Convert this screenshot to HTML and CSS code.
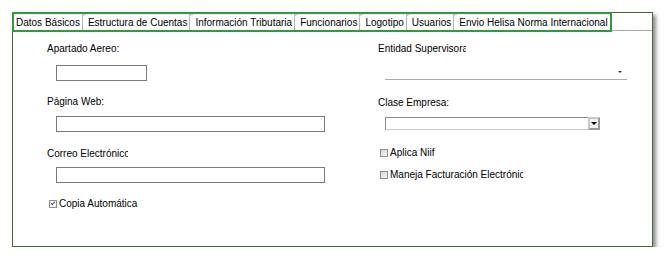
FILE: index.html
```html
<!DOCTYPE html>
<html lang="es">
  <head>
    <meta charset="UTF-8" />
    <title>Datos Básicos</title>
    <link rel="stylesheet" href="styles.css">
  </head>
  <body>
    <div class="panel">
      <div class="tabrow">
        <div class="tabs">
          <span class="tab first">Datos Básicos</span>
          <span class="tab">Estructura de Cuentas</span>
          <span class="tab">Información Tributaria</span>
          <span class="tab">Funcionarios</span>
          <span class="tab">Logotipo</span>
          <span class="tab">Usuarios</span>
          <span class="tab">Envio Helisa Norma Internacional</span>
        </div>
      </div>

      <div class="form">
        <div class="col">
          <div class="label l1">Apartado Aereo:</div>
          <div class="input short i1"></div>
          <div class="label l2">Página Web:</div>
          <div class="input long i2"></div>
          <div class="label l3 clip-left">Correo Electrónico</div>
          <div class="input long i3"></div>
          <label class="check c1"><span class="box checked"></span>Copia Automática</label>
        </div>
        <div class="col">
          <div class="label l1 clip-right">Entidad Supervisora</div>
          <div class="combo"><span class="arrow-sm"></span></div>
          <div class="label r2">Clase Empresa:</div>
          <div class="select"><span class="btn"><span class="arrow"></span></span></div>
          <label class="check c2"><span class="box"></span>Aplica Niif</label>
          <label class="check c3"><span class="box"></span><span class="clip-check">Maneja Facturación Electrónica</span></label>
        </div>
      </div>
    </div>
  </body>
</html>
```

FILE: styles.css
```css
body {
  margin: 0;
  background: #fff;
  font-family: Arial, "Liberation Sans", sans-serif;
  font-size: 10px;
  color: #000;
}
.panel {
  margin: 12px 0 0 12px;
  width: 639px;
  height: 233px;
  border: 1px solid #44673a;
  box-shadow: 3px 3px 4px rgba(0, 0, 0, 0.45);
}
.tabrow {
  display: flex;
  height: 20px;
  margin: -1px 0 0 -1px;
  background: linear-gradient(#a8a8a8, #a8a8a8) 0 18px / 100% 1px no-repeat;
}
.tabs {
  display: flex;
  height: 16px;
  border: 2px solid #2a9e3c;
  background: #fff;
}
.tab {
  position: relative;
  line-height: 17px;
  padding: 0 2px 0 5px;
  border-left: 1px solid #b4b4b4;
  white-space: nowrap;
}
.tab::before {
  content: "";
  position: absolute;
  left: -1px;
  top: 0;
  width: 3px;
  height: 3px;
  border-top: 1px solid #c4c4c4;
  border-left: 1px solid #c4c4c4;
  border-top-left-radius: 3px;
}
.tab.first {
  border-left: none;
  padding-left: 2px;
}
.tab.first::before {
  display: none;
}
.form {
  display: grid;
  grid-template-columns: 331px 1fr;
  padding-left: 34px;
}
.col {
  display: flex;
  flex-direction: column;
  align-items: flex-start;
}
.label {
  line-height: 13px;
  height: 13px;
  white-space: nowrap;
}
.clip-left {
  width: 81px;
  overflow: hidden;
}
.clip-right {
  width: 88px;
  overflow: hidden;
}
.l1 { margin-top: 10px; }
.l2 { margin-top: 14px; }
.l3 { margin-top: 15px; }
.r2 { margin-top: 16px; }
.input {
  box-sizing: border-box;
  height: 16px;
  margin-left: 9px;
  border: 1px solid #7a7a7a;
  background: #fff;
}
.short { width: 91px; }
.long { width: 269px; }
.i1 { margin-top: 10px; }
.i2 { margin-top: 8px; }
.i3 { margin-top: 7px; }
.combo {
  position: relative;
  box-sizing: border-box;
  width: 242px;
  height: 14px;
  margin: 11px 0 0 7px;
  border-bottom: 1px solid #a6adb3;
}
.arrow-sm {
  position: absolute;
  right: 5px;
  top: 5px;
  border-left: 2px solid transparent;
  border-right: 2px solid transparent;
  border-top: 2px solid #333;
}
.select {
  display: flex;
  justify-content: flex-end;
  box-sizing: border-box;
  width: 215px;
  height: 13px;
  margin: 8px 0 0 7px;
  border: 1px solid #c8c8c8;
  border-top-color: #8a8a8a;
  border-left-color: #8a8a8a;
}
.btn {
  display: flex;
  align-items: center;
  justify-content: center;
  box-sizing: border-box;
  width: 12px;
  height: 13px;
  margin: -1px -1px 0 0;
  border: 2px solid #9a9a9a;
  border-top-color: #c8c8c8;
  border-left-color: #c8c8c8;
  background: #f2f2f2;
}
.arrow {
  border-left: 3px solid transparent;
  border-right: 3px solid transparent;
  border-top: 3px solid #000;
}
.check {
  display: flex;
  align-items: center;
  gap: 1px;
  height: 13px;
  line-height: 13px;
  margin-left: 2px;
  white-space: nowrap;
}
.c1 { margin-top: 14px; }
.c2 { margin-top: 16px; }
.c3 { margin-top: 9px; }
.box {
  box-sizing: border-box;
  width: 8px;
  height: 8px;
  margin-right: 1px;
  border: 1px solid #8e8f8f;
  background: linear-gradient(135deg, #d8d8d8, #f4f4f4);
}
.box.checked {
  position: relative;
  background: #f2f2f2;
}
.box.checked::after {
  content: "";
  position: absolute;
  top: 1px;
  left: 1px;
  width: 3px;
  height: 1px;
  border-left: 1px solid #2a4a9a;
  border-bottom: 1px solid #2a4a9a;
  transform: rotate(-45deg);
}
.clip-check {
  width: 133px;
  overflow: hidden;
}
```
